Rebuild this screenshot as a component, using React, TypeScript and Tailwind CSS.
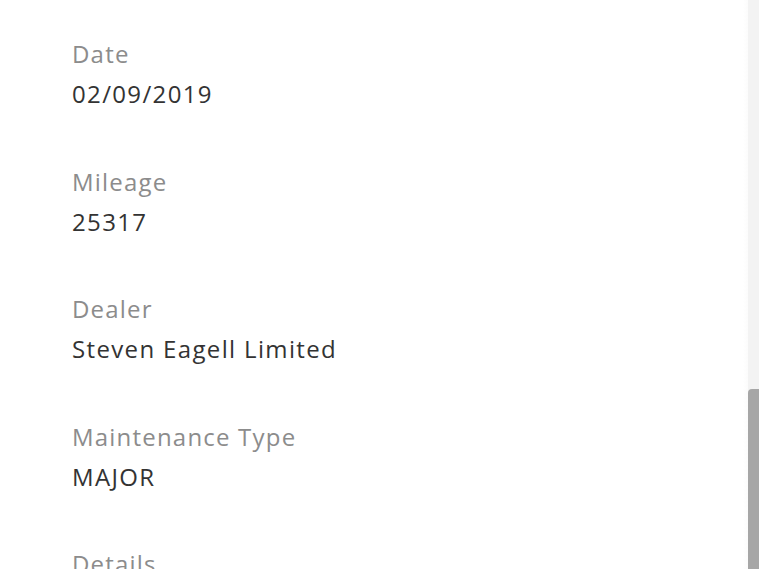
import React from "react";

const rows = [
  { label: "Date", value: "02/09/2019" },
  { label: "Mileage", value: "25317" },
  { label: "Dealer", value: "Steven Eagell Limited" },
  { label: "Maintenance Type", value: "MAJOR" },
  { label: "Details", value: "" },
];

export default function App() {
  return (
    <div className="flex h-[569px] w-[759px] overflow-hidden bg-white">
      <div
        className="flex-1 pl-[72px] pt-[34px]"
        style={{ fontFamily: '"Open Sans", "Noto Sans", sans-serif' }}
      >
        {rows.map((r) => (
          <div key={r.label} className="mb-[47.5px]">
            <div className="text-[24px] leading-[40px] tracking-[1.2px] text-[#8c8c8c]">{r.label}</div>
            <div className="h-[40px] text-[24px] leading-[40px] tracking-[1.35px] text-[#333333]">{r.value}</div>
          </div>
        ))}
      </div>
      <div className="flex w-[16px] flex-col">
        <div className="flex flex-1 bg-gradient-to-r from-white to-[#f3f3f3]">
          <div className="w-[5px]" />
          <div className="flex flex-1 flex-col bg-[#f3f3f3]">
            <div className="h-[389px]" />
            <div className="flex-1 rounded-tl-[4px] bg-[#a6a6a6]" />
          </div>
        </div>
      </div>
    </div>
  );
}
